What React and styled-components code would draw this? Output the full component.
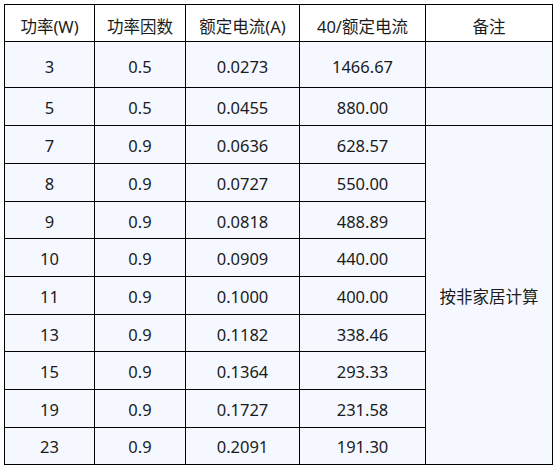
import React from "react";
import styled, { createGlobalStyle } from "styled-components";

const Global = createGlobalStyle`
  html, body { margin: 0; padding: 0; background: #ffffff; }
  body { font-family: "Noto Sans", "Noto Sans CJK SC", sans-serif; }
`;

const Page = styled.div`
  padding: 4px;
`;

const Table = styled.table`
  border-collapse: collapse;
  table-layout: fixed;
  width: 548px;
  font-family: "Noto Sans", "Noto Sans CJK SC", sans-serif;
  font-size: 16.5px;
  color: #1b1b1b;
`;

const HeadRow = styled.tr`
  height: 37px;
`;

const BodyRow = styled.tr`
  height: ${(p) => p.$h}px;
`;

const Th = styled.th`
  border: 1px solid #000;
  background: #ffffff;
  font-weight: 400;
  text-align: center;
  vertical-align: middle;
  padding: 5px 0 0;
  white-space: nowrap;
`;

const Td = styled.td`
  border: 1px solid #000;
  background: #f5f9ff;
  text-align: center;
  vertical-align: middle;
  padding: ${(p) => (p.$tall ? "4px 0 0" : "2px 0 0")};
  white-space: nowrap;
`;

const rows = [
  ["3", "0.5", "0.0273", "1466.67"],
  ["5", "0.5", "0.0455", "880.00"],
  ["7", "0.9", "0.0636", "628.57"],
  ["8", "0.9", "0.0727", "550.00"],
  ["9", "0.9", "0.0818", "488.89"],
  ["10", "0.9", "0.0909", "440.00"],
  ["11", "0.9", "0.1000", "400.00"],
  ["13", "0.9", "0.1182", "338.46"],
  ["15", "0.9", "0.1364", "293.33"],
  ["19", "0.9", "0.1727", "231.58"],
  ["23", "0.9", "0.2091", "191.30"],
];

const heights = [46, 38, 38, 37.7, 37.7, 37.7, 37.7, 37.7, 37.7, 37.7, 37.3];

export default function App() {
  return (
    <>
      <Global />
      <Page>
        <Table>
          <colgroup>
            <col style={{ width: 90 }} />
            <col style={{ width: 91 }} />
            <col style={{ width: 114 }} />
            <col style={{ width: 126 }} />
            <col style={{ width: 127 }} />
          </colgroup>
          <thead>
            <HeadRow>
              <Th>功率(W)</Th>
              <Th>功率因数</Th>
              <Th>额定电流(A)</Th>
              <Th>40/额定电流</Th>
              <Th>备注</Th>
            </HeadRow>
          </thead>
          <tbody>
            {rows.map((r, i) => (
              <BodyRow key={r[0]} $h={heights[i]}>
                {r.map((c, j) => (
                  <Td key={j} $tall={i === 0}>{c}</Td>
                ))}
                {i < 2 && <Td />}
                {i === 2 && <Td rowSpan={9}>按非家居计算</Td>}
              </BodyRow>
            ))}
          </tbody>
        </Table>
      </Page>
    </>
  );
}
